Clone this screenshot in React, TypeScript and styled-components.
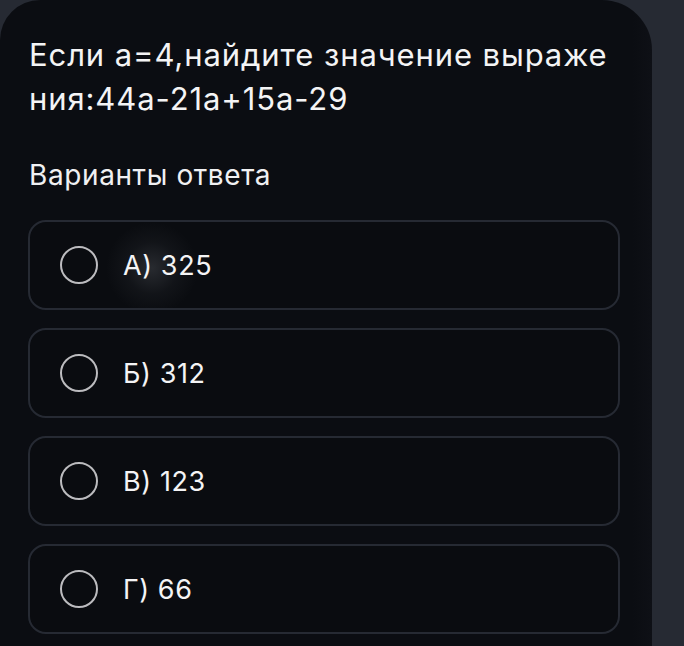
import styled, { createGlobalStyle } from 'styled-components';

const GlobalStyle = createGlobalStyle`
  html, body {
    margin: 0;
    padding: 0;
    background: #262a33;
  }
  body {
    font-family: Inter, 'Noto Sans', sans-serif;
    -webkit-font-smoothing: antialiased;
  }
`;

const Page = styled.div`
  width: 684px;
  height: 646px;
  overflow: hidden;
  background: #262a33;
`;

const Panel = styled.div`
  width: 652px;
  min-height: 646px;
  box-sizing: border-box;
  background: linear-gradient(90deg, #0b0d12 0%, #0b0d12 97%, #0e1016 100%);
  border-radius: 40px 50px 0 0;
  padding: 33px 32px 0 28px;
`;

const Question = styled.h1`
  margin: 0;
  font-size: 31px;
  font-weight: 400;
  line-height: 44px;
  color: #f4f4f5;
  padding-left: 1px;
  letter-spacing: 0.9px;
`;

const Subtitle = styled.h2`
  margin: 39px 0 0;
  font-size: 28px;
  font-weight: 400;
  line-height: 31px;
  color: #f0f0f2;
  padding-left: 1px;
  letter-spacing: 0.6px;
`;

const Options = styled.div`
  display: flex;
  flex-direction: column;
  gap: 18px;
  margin-top: 29px;
`;

const Option = styled.label<{ $glow?: boolean }>`
  display: flex;
  align-items: center;
  gap: 25px;
  height: 90px;
  box-sizing: border-box;
  padding-left: 30px;
  border: 2px solid #262a33;
  border-radius: 18px;
  background: ${(p) =>
    p.$glow
      ? 'radial-gradient(circle at 122px 46px, rgba(160,165,175,0.2) 0px, rgba(120,125,135,0.07) 26px, transparent 46px), #0a0c10'
      : '#0a0c10'};
  cursor: pointer;
`;

const Radio = styled.span`
  width: 34px;
  height: 34px;
  border-radius: 50%;
  border: 2.5px solid #bcbcbf;
  flex-shrink: 0;
`;

const OptionText = styled.span`
  font-size: 27px;
  color: #f4f4f5;
  line-height: 1;
  letter-spacing: 0.6px;
`;

const answers = ['А) 325', 'Б) 312', 'В) 123', 'Г) 66'];

export default function App() {
  return (
    <Page>
      <GlobalStyle />
      <Panel>
        <Question>
          Если a=4,найдите значение выраже
          <br />
          ния:44a-21a+15a-29
        </Question>
        <Subtitle>Варианты ответа</Subtitle>
        <Options>
          {answers.map((a, i) => (
            <Option key={a} $glow={i === 0}>
              <Radio />
              <OptionText>{a}</OptionText>
            </Option>
          ))}
        </Options>
      </Panel>
    </Page>
  );
}
